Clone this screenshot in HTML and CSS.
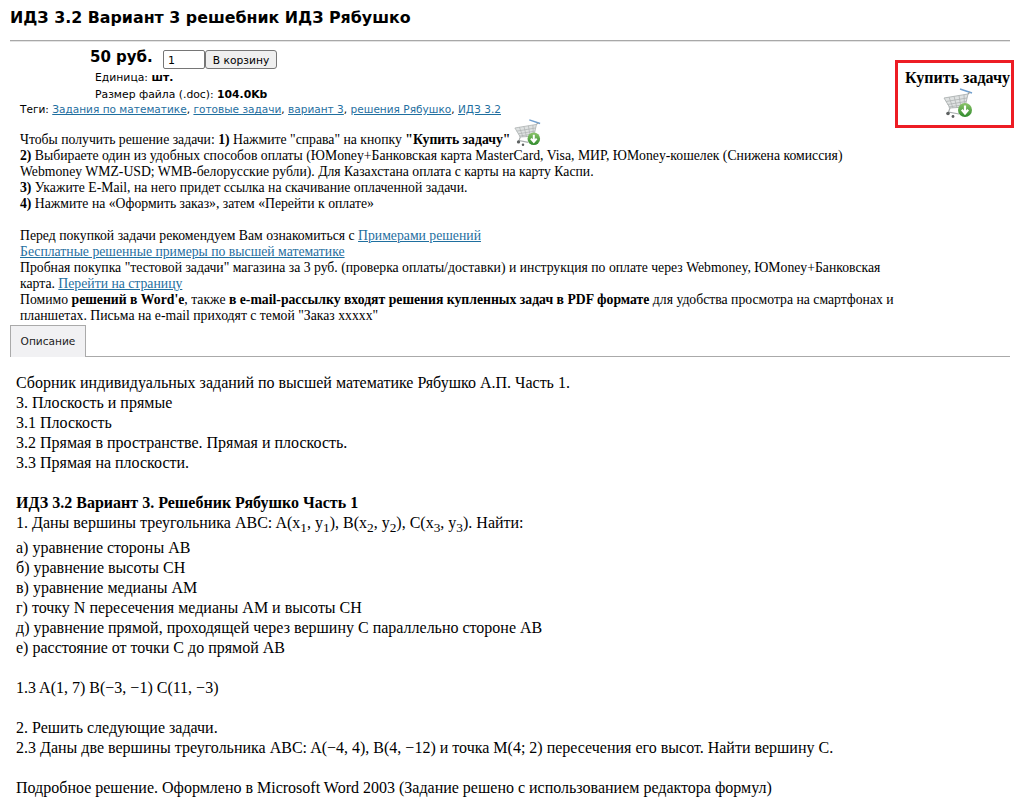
FILE: index.html
```html
<!DOCTYPE html>
<html lang="ru">
<head>
<meta charset="utf-8">
<title>ИДЗ 3.2 Вариант 3</title>
<link rel="stylesheet" href="styles.css">
</head>
<body>
<svg class="defs" width="0" height="0">
  <defs>
    <linearGradient id="ball" x1="0" y1="0" x2="0" y2="1">
      <stop offset="0" stop-color="#8cc56a"/>
      <stop offset="1" stop-color="#2f8a2c"/>
    </linearGradient>
    <symbol id="cart" viewBox="0 0 30 30">
      <path d="M1 10 L25 6 L22 19 L7 20 Z" fill="#dfe2e2" stroke="#b4b9b9" stroke-width="1"/>
      <path d="M3 13.500 L24 10 M4.500 16.500 L23 13.500 M5.500 19 L22.500 16.500 M6 9 L10 20 M11 8.200 L14 20 M16 7.500 L18 19.500 M21 6.700 L21.500 19" stroke="#aeb3b3" stroke-width=".8" fill="none"/>
      <path d="M17 1 L29 5" stroke="#6f9fd0" stroke-width="1.600" fill="none"/>
      <path d="M25 6 L27 4" stroke="#9aa0a0" stroke-width="1.200" fill="none"/>
      <path d="M7 20 L5.500 24 L16 26" stroke="#a8aeae" stroke-width="1.200" fill="none"/>
      <circle cx="5" cy="25.500" r="1.800" fill="#5c6060"/>
      <circle cx="10" cy="28.500" r="1.400" fill="#5c6060"/>
      <circle cx="22" cy="22" r="7" fill="url(#ball)"/>
      <path d="M22 17.500 V25 M18.800 21.800 L22 25.500 L25.200 21.800" stroke="#fff" stroke-width="2.200" fill="none"/>
    </symbol>
  </defs>
</svg>
<main class="page">
  <h1 class="title">ИДЗ 3.2 Вариант 3 решебник ИДЗ Рябушко</h1>
  <hr class="rule">
  <div class="product">
    <div class="product-main">
      <div class="buy-row">
        <b class="price">50 руб.</b>
        <input class="qty" type="text" value="1">
        <button class="add" type="button">В корзину</button>
      </div>
      <div class="meta">Единица: <b>шт.</b></div>
      <div class="meta">Размер файла (.doc): <b>104.0Kb</b></div>
      <div class="tags">Теги: <a href="#">Задания по математике</a>, <a href="#">готовые задачи</a>, <a href="#">вариант 3</a>, <a href="#">решения Рябушко</a>, <a href="#">ИДЗ 3.2</a></div>
      <div class="intro">
        <p class="first-line">Чтобы получить решение задачи: <b>1)</b> Нажмите "справа" на кнопку <b>"Купить задачу"</b> <svg class="cart-inline"><use href="#cart"/></svg></p>
        <p><b>2)</b> Выбираете один из удобных способов оплаты (ЮMoney+Банковская карта MasterCard, Visa, МИР, ЮMoney-кошелек (Снижена комиссия)<br>Webmoney WMZ-USD; WMB-белорусские рубли). Для Казахстана оплата с карты на карту Каспи.</p>
        <p><b>3)</b> Укажите E-Mail, на него придет ссылка на скачивание оплаченной задачи.</p>
        <p><b>4)</b> Нажмите на «Оформить заказ», затем «Перейти к оплате»</p>
        <p class="gap">Перед покупкой задачи рекомендуем Вам ознакомиться с <a href="#">Примерами решений</a></p>
        <p><a href="#">Бесплатные решенные примеры по высшей математике</a></p>
        <p>Пробная покупка "тестовой задачи" магазина за 3 руб. (проверка оплаты/доставки) и инструкция по оплате через Webmoney, ЮMoney+Банковская<br>карта. <a href="#">Перейти на страницу</a></p>
        <p>Помимо <b>решений в Word'e</b>, также <b>в e-mail-рассылку входят решения купленных задач в PDF формате</b> для удобства просмотра на смартфонах и<br>планшетах. Письма на e-mail приходят с темой "Заказ xxxxx"</p>
      </div>
    </div>
    <aside class="buy-box">
      <b>Купить задачу</b>
      <svg class="cart-box"><use href="#cart"/></svg>
    </aside>
  </div>
  <div class="tabs"><span class="tab">Описание</span></div>
  <section class="desc">
    <p>Сборник индивидуальных заданий по высшей математике Рябушко А.П. Часть 1.</p>
    <p>3. Плоскость и прямые</p>
    <p>3.1 Плоскость</p>
    <p>3.2 Прямая в пространстве. Прямая и плоскость.</p>
    <p>3.3 Прямая на плоскости.</p>
    <p class="blank"></p>
    <p><b>ИДЗ 3.2 Вариант 3. Решебник Рябушко Часть 1</b></p>
    <p class="sub-line">1. Даны вершины треугольника ABC: A(x<sub>1</sub>, y<sub>1</sub>), B(x<sub>2</sub>, y<sub>2</sub>), C(x<sub>3</sub>, y<sub>3</sub>). Найти:</p>
    <p>а) уравнение стороны AB</p>
    <p>б) уравнение высоты CH</p>
    <p>в) уравнение медианы AM</p>
    <p>г) точку N пересечения медианы AM и высоты CH</p>
    <p>д) уравнение прямой, проходящей через вершину C параллельно стороне AB</p>
    <p>е) расстояние от точки C до прямой AB</p>
    <p class="blank"></p>
    <p>1.3 A(1, 7) B(−3, −1) C(11, −3)</p>
    <p class="blank"></p>
    <p>2. Решить следующие задачи.</p>
    <p>2.3 Даны две вершины треугольника ABC: A(−4, 4), B(4, −12) и точка M(4; 2) пересечения его высот. Найти вершину C.</p>
    <p class="blank"></p>
    <p>Подробное решение. Оформлено в Microsoft Word 2003 (Задание решено с использованием редактора формул)</p>
  </section>
</main>
</body>
</html>
```
FILE: styles.css
```css
* { box-sizing: border-box; }
html, body { margin: 0; padding: 0; }
body { background: #fff; color: #000; font-family: "Liberation Serif", serif; overflow: hidden; height: 805px; }
.defs { position: absolute; }
p { margin: 0; }
a { color: #1f6f9f; text-decoration: underline; }
.page { padding: 0 6px 0 10px; }
.title { margin: 0; padding-top: 8px; height: 40px; font: bold 15.850px/20px "DejaVu Sans", sans-serif; }
.rule { margin: 0; height: 2px; border: 0; border-top: 1px solid #a8a8a8; border-bottom: 1px solid #e4e4e4; }
.product { display: flex; }
.product-main { width: 885px; flex: none; font-family: "DejaVu Sans", sans-serif; }
.buy-row { display: flex; align-items: flex-start; height: 27px; padding-left: 80px; padding-top: 8px; }
.price { font-size: 15px; line-height: 17px; width: 73px; margin-top: -1px; }
.qty { width: 42px; height: 19px; border: 1px solid #767676; border-radius: 2px; padding: 1px 4px 0; font: 11px "DejaVu Sans", sans-serif; margin: 0; }
.add { height: 19px; width: 72px; padding: 1px 0 0; border: 1px solid #767676; border-radius: 3px; background: #efefef; font: 10.700px "DejaVu Sans", sans-serif; color: #000; }
.meta { font-size: 10.800px; line-height: 17px; padding-left: 85px; }
.buy-row + .meta { padding-top: 1px; line-height: 16px; }
.tags { font-size: 10.550px; line-height: 14px; padding-left: 10px; margin-top: -1px; }
.intro { margin-top: 16px; padding-left: 10px; font: 13.730px/16px "Liberation Serif", serif; white-space: nowrap; }
.first-line { height: 16px; }
.cart-inline { width: 27px; height: 27px; margin-top: -27px; vertical-align: -2px; }
.gap { margin-top: 16px; }
.buy-box { display: flex; flex-direction: column; align-items: center; flex: none; width: 119px; height: 68px; margin-top: 18px; padding: 6px 0 0 6px; border: 3px solid #ed1c24; font-size: 16px; line-height: 18px; }
.cart-box { width: 30px; height: 30px; margin-top: 1px; }
.tabs { display: flex; height: 32px; margin-top: 1px; border-bottom: 1px solid #aaa; }
.tab { flex: none; height: 32px; width: 76px; background: #f1f1f3; border: 1px solid #aaa; border-bottom: 0; font: 10.600px/31px "DejaVu Sans", sans-serif; text-align: center; color: #222; }
.desc { padding: 16px 0 0 6px; font-size: 16px; line-height: 20px; }
.blank { height: 20px; }
.sub-line { padding-bottom: 5px; }
sub { font-size: 13.330px; line-height: 0; }
```
